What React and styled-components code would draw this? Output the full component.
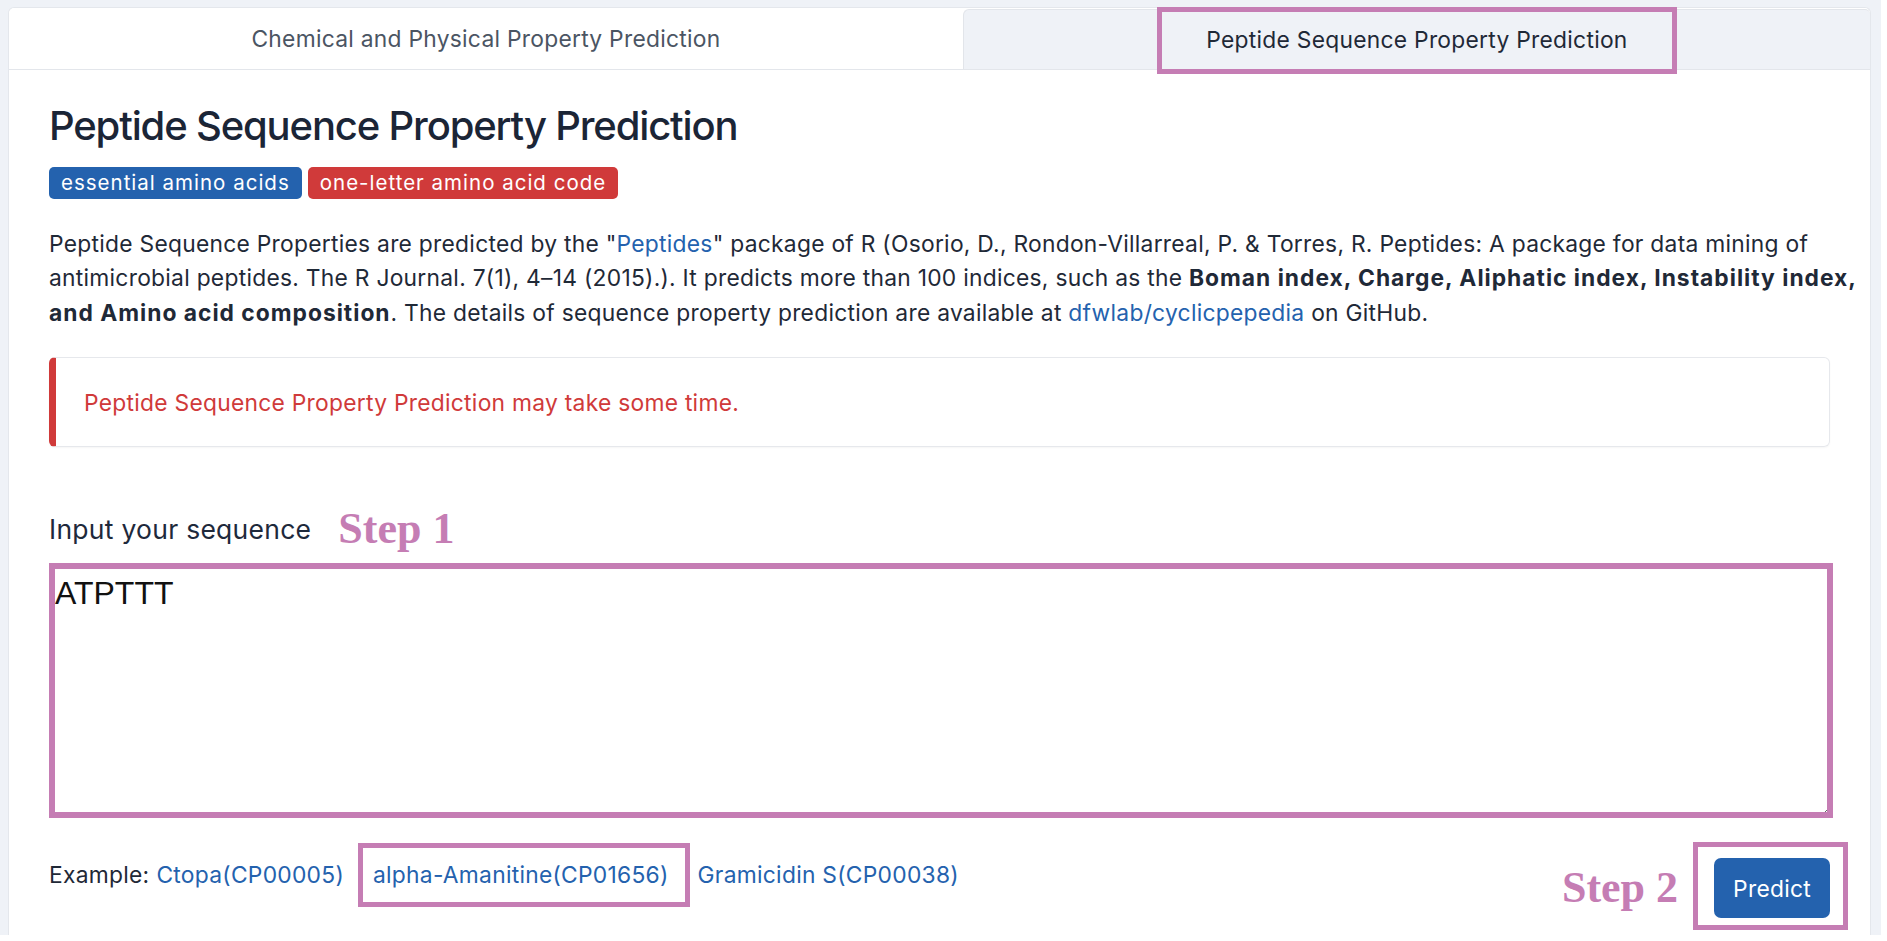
import React from "react";
import styled, { createGlobalStyle } from "styled-components";

const PINK = "#c57db4";
const BLUE = "#2462ae";
const RED = "#d03a3a";

const GlobalStyle = createGlobalStyle`
  html, body { margin: 0; padding: 0; background: #ffffff; }
  body {
    font-family: Inter, "Noto Sans", sans-serif;
    letter-spacing: 0.27px;
    -webkit-font-smoothing: antialiased;
  }
  *, *::before, *::after { box-sizing: border-box; }
`;

const Page = styled.div`
  width: 1881px;
  height: 935px;
  background: #eff2f7;
  padding: 7px 10px 0 8px;
`;

const Card = styled.section`
  height: 100%;
  background: #ffffff;
  border: 1px solid #e4e7ec;
  border-bottom: none;
  border-radius: 6px 6px 0 0;
  display: flex;
  flex-direction: column;
`;

const TabBar = styled.div`
  display: flex;
  height: 62px;
  border-bottom: 1px solid #e3e6eb;
`;

const Tab = styled.div`
  flex: 1 1 auto;
  display: flex;
  align-items: center;
  justify-content: center;
  font-size: 22.8px;
  line-height: 34px;
  color: ${(p) => (p.$selected ? "#1f2937" : "#4b5563")};
  background: ${(p) => (p.$selected ? "#eff2f7" : "#ffffff")};
  border-top: ${(p) => (p.$selected ? "1px solid #e2e5ea" : "none")};
  border-left: ${(p) => (p.$selected ? "1px solid #e2e5ea" : "none")};
  border-radius: ${(p) => (p.$selected ? "6px 5px 0 0" : "6px 0 0 0")};
  margin-top: ${(p) => (p.$selected ? "1px" : "0")};
`;

const Annotated = styled.span`
  position: relative;
  display: inline-flex;
  align-items: center;
`;

const Frame = styled.span`
  position: absolute;
  top: ${(p) => p.$t}px;
  right: ${(p) => p.$r}px;
  bottom: ${(p) => p.$b}px;
  left: ${(p) => p.$l}px;
  border: ${(p) => p.$w || 5}px solid ${PINK};
  pointer-events: none;
`;

const Content = styled.div`
  flex: 1;
  display: flex;
  flex-direction: column;
  padding: 0 40px;
`;

const Heading = styled.h2`
  margin: 30.7px 0 0;
  font-size: 40px;
  line-height: 50px;
  font-weight: 500;
  color: #1b2536;
  letter-spacing: -1.15px;
`;

const BadgeRow = styled.div`
  display: flex;
  gap: 6px;
  margin-top: 16px;
`;

const Badge = styled.span`
  display: inline-flex;
  align-items: center;
  height: 32px;
  padding: 0 12px;
  border-radius: 5px;
  font-size: 20.5px;
  letter-spacing: 1px;
  color: #ffffff;
  background: ${(p) => (p.$tone === "red" ? RED : BLUE)};
`;

const Paragraph = styled.p`
  margin: 28.6px 0 0;
  font-size: 22.8px;
  line-height: 34.2px;
  color: #1f2937;
  white-space: nowrap;
`;

const Strong = styled.b`
  font-weight: 700;
  letter-spacing: 1px;
`;

const Link = styled.a`
  color: ${BLUE};
  text-decoration: none;
  cursor: pointer;
`;

const Alert = styled.div`
  margin-top: 27px;
  border: 1px solid #e6e8ec;
  border-left: 7px solid ${RED};
  border-radius: 6px;
  padding: 28.5px 28px 25.5px;
  font-size: 22.8px;
  line-height: 34.2px;
  color: ${RED};
  box-shadow: 0 1px 2px rgba(0, 0, 0, 0.04);
`;

const LabelRow = styled.div`
  display: flex;
  align-items: flex-end;
  gap: 27px;
  margin-top: 65.4px;
`;

const FieldLabel = styled.label`
  font-size: 26.5px;
  line-height: 34px;
  font-weight: 400;
  color: #1e293b;
`;

const StepTag = styled.span`
  font-family: "Liberation Serif", "Times New Roman", serif;
  font-weight: 700;
  font-size: 44px;
  line-height: 30px;
  letter-spacing: 0;
  color: ${PINK};
  margin-bottom: ${(p) => p.$drop || 0}px;
`;

const FieldWrap = styled.div`
  position: relative;
  margin-top: 16.6px;
  display: flex;
`;

const SequenceInput = styled.textarea`
  width: 100%;
  height: 255px;
  margin: 0;
  border: 1px solid #cfd4db;
  padding: 11px 5px;
  font-family: "Liberation Sans", Arial, sans-serif;
  font-size: 32px;
  letter-spacing: 0;
  color: #111111;
  resize: vertical;
  outline: none;
  background: #ffffff;
`;

const BottomRow = styled.div`
  display: flex;
  justify-content: space-between;
  align-items: flex-start;
  margin-top: 40px;
`;

const Examples = styled.div`
  display: flex;
  align-items: center;
  font-size: 22.8px;
  line-height: 34.2px;
  color: #1f2937;
`;

const ExampleLabel = styled.span`
  margin-right: 7px;
`;

const ExampleList = styled.div`
  display: flex;
  gap: 29px;
`;

const Actions = styled.div`
  display: flex;
  align-items: center;
  gap: 36px;
`;

const PredictButton = styled.button`
  height: 60px;
  padding: 0 19px;
  border: none;
  border-radius: 7px;
  background: ${BLUE};
  color: #ffffff;
  font-family: Inter, "Noto Sans", sans-serif;
  font-size: 22.8px;
  letter-spacing: 0.27px;
  cursor: pointer;
`;

export default function App() {
  return (
    <>
      <GlobalStyle />
      <Page>
        <Card>
          <TabBar>
            <Tab>Chemical and Physical Property Prediction</Tab>
            <Tab $selected>
              <Annotated>
                Peptide Sequence Property Prediction
                <Frame $t={-16} $r={-49} $b={-17} $l={-49} />
              </Annotated>
            </Tab>
          </TabBar>
          <Content>
            <Heading>Peptide Sequence Property Prediction</Heading>
            <BadgeRow>
              <Badge>essential amino acids</Badge>
              <Badge $tone="red">one-letter amino acid code</Badge>
            </BadgeRow>
            <Paragraph>
              Peptide Sequence Properties are predicted by the "<Link>Peptides</Link>" package of R (Osorio, D., Rondon-Villarreal, P. &amp; Torres, R. Peptides: A package for data mining of
              <br />
              antimicrobial peptides. The R Journal. 7(1), 4–14 (2015).). It predicts more than 100 indices, such as the{" "}
              <Strong>Boman index, Charge, Aliphatic index, Instability index,</Strong>
              <br />
              <Strong>and Amino acid composition</Strong>. The details of sequence property prediction are available at{" "}
              <Link>dfwlab/cyclicpepedia</Link> on GitHub.
            </Paragraph>
            <Alert>Peptide Sequence Property Prediction may take some time.</Alert>
            <LabelRow>
              <FieldLabel htmlFor="seq">Input your sequence</FieldLabel>
              <StepTag $drop={2}>Step 1</StepTag>
            </LabelRow>
            <FieldWrap>
              <SequenceInput id="seq" defaultValue="ATPTTT" />
              <Frame $t={0} $r={-3} $b={0} $l={0} $w={6} />
            </FieldWrap>
            <BottomRow>
              <Examples>
                <ExampleLabel>Example:</ExampleLabel>
                <ExampleList>
                  <Link>Ctopa(CP00005)</Link>
                  <Annotated>
                    <Link>alpha-Amanitine(CP01656)</Link>
                    <Frame $t={-15} $r={-21} $b={-15} $l={-15} />
                  </Annotated>
                  <Link>Gramicidin S(CP00038)</Link>
                </ExampleList>
              </Examples>
              <Actions>
                <StepTag>Step 2</StepTag>
                <Annotated>
                  <PredictButton>Predict</PredictButton>
                  <Frame $t={-16} $r={-18} $b={-12} $l={-21} />
                </Annotated>
              </Actions>
            </BottomRow>
          </Content>
        </Card>
      </Page>
    </>
  );
}
